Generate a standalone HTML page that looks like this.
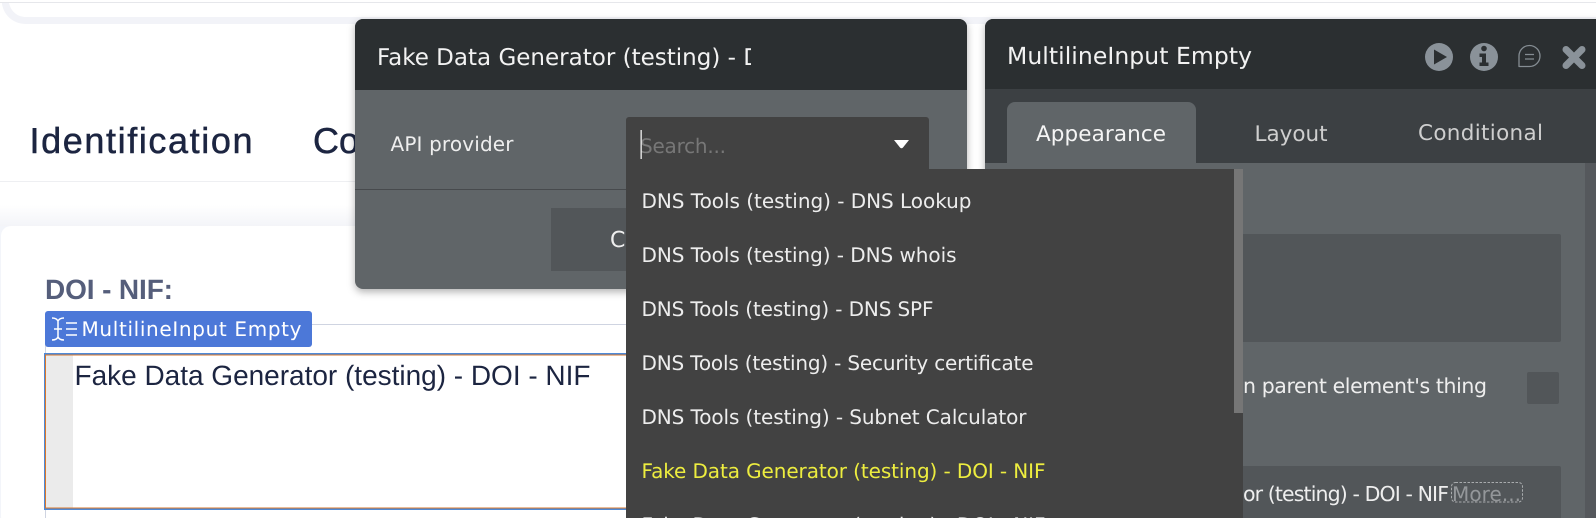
<!DOCTYPE html>
<html lang="en"><head><meta charset="utf-8"><title>Bubble editor</title>
<style>
html,body{margin:0;padding:0;width:1596px;height:518px;overflow:hidden;background:#fff}
svg{display:block;position:absolute;left:0;top:0}
.o{font-family:"DejaVu Sans","Liberation Sans",sans-serif}
.l{font-family:"Liberation Sans",sans-serif}
</style></head><body>
<svg width="1596" height="518" viewBox="0 0 1596 518" xmlns="http://www.w3.org/2000/svg" text-rendering="geometricPrecision">
<defs>
<filter id="sh" x="-10%" y="-10%" width="120%" height="125%"><feDropShadow dx="0" dy="3" stdDeviation="4" flood-color="#000" flood-opacity=".3"/></filter>
<linearGradient id="g" x1="0" y1="0" x2="0" y2="1"><stop offset="0" stop-color="#fff"/><stop offset="1" stop-color="#f3f4f8"/></linearGradient>
<clipPath id="c1"><rect x="355" y="19" width="396" height="70"/></clipPath>
</defs>
<!-- page background -->
<rect x="0" y="2" width="1596" height="1" fill="#e6e7eb"/>
<path d="M2 3V4C4 16 14 24 26 24H1596V17H26C18 17 11 12 9 3Z" fill="#f2f3f8"/>
<text class="l" x="29.500" y="153" font-size="36" fill="#1c2541" stroke="#1c2541" stroke-width=".5" textLength="223">Identification</text>
<text class="l" x="313" y="153" font-size="36" fill="#1c2541" stroke="#1c2541" stroke-width=".5">Co</text>
<rect x="0" y="181" width="360" height="1" fill="#eeeff2"/>
<rect x="0" y="205" width="360" height="22" fill="url(#g)"/>
<rect x="0" y="226" width="1596" height="292" fill="#f3f5fa"/>
<rect x="1" y="226" width="1595" height="300" rx="10" fill="#fff"/>
<text class="l" x="45" y="299" font-size="28" font-weight="700" fill="#555e7b" textLength="128">DOI - NIF:</text>
<rect x="312" y="324" width="320" height="1" fill="#cfd4e1"/>
<rect x="45" y="324" width="1" height="194" fill="#cfd4e1"/>
<rect x="45" y="311" width="267" height="36" rx="3" fill="#4c78d8"/>
<g stroke="#fff" fill="none" stroke-width="1.5">
<path d="M52 318c3 0 5 1 6 3 1-2 3-3 6-3M58 321v16M52 340c3 0 5-1 6-3 1 2 3 3 6 3M54 329h8"/>
<path d="M66 323h11M66 329h11M66 335h11"/>
</g>
<text class="o" x="81.500" y="336" font-size="20" fill="#fff" textLength="220">MultilineInput Empty</text>
<rect x="44" y="353" width="592" height="157" fill="#4e8ad8"/>
<rect x="45" y="354.500" width="591" height="154" fill="#d9782d"/>
<rect x="46" y="355.500" width="590" height="152" fill="#fff"/>
<rect x="46" y="355.500" width="27" height="152" fill="#ebebeb"/>
<text class="l" x="74.500" y="385" font-size="28" fill="#1c2541" textLength="516">Fake Data Generator (testing) - DOI - NIF</text>
<!-- modal 1 -->
<g filter="url(#sh)"><rect x="355" y="19" width="612" height="270" rx="8" fill="#606568"/></g>
<path d="M355 90V27a8 8 0 0 1 8-8H959a8 8 0 0 1 8 8V90Z" fill="#2b2f31"/>
<g clip-path="url(#c1)"><text class="o" x="377" y="65" font-size="23" fill="#f2f2f2" textLength="469">Fake Data Generator (testing) - DOI - NIF</text></g>
<text class="o" x="390.500" y="151" font-size="20" fill="#eee" textLength="123">API provider</text>
<rect x="355" y="189" width="612" height="1" fill="#474a4d"/>
<rect x="551" y="208" width="100" height="63" fill="#525659"/>
<text class="o" x="610" y="247" font-size="22" fill="#eee">C</text>
<!-- modal 2 -->
<g filter="url(#sh)"><rect x="985" y="19" width="620" height="520" rx="8" fill="#54585b"/></g>
<rect x="985" y="163" width="600" height="355" fill="#606568"/>
<rect x="985" y="89" width="620" height="74" fill="#3c4043"/>
<path d="M985 89V27a8 8 0 0 1 8-8H1596V89Z" fill="#2b2f31"/>
<text class="o" x="1007" y="64" font-size="23.500" fill="#f2f2f2" textLength="245">MultilineInput Empty</text>
<circle cx="1439" cy="57" r="14" fill="#8a9299"/>
<path d="M1434 49.500 1434 64.500 1447 57Z" fill="#2b2f31"/>
<circle cx="1484" cy="57" r="14" fill="#8a9299"/>
<circle cx="1484" cy="48.500" r="2.800" fill="#2b2f31"/>
<path d="M1479.500 53.500h6.500v9h2.500v3.500h-9v-3.500h2.500v-5.500h-2.500Z" fill="#2b2f31"/>
<path d="M1519 66.500V56a10.500 10.500 0 1 1 10.500 10.500Z" fill="none" stroke="#858d93" stroke-width="1.300" stroke-linejoin="round"/>
<path d="M1525 54.500h9M1525 59h9" stroke="#858d93" stroke-width="1.300" fill="none"/>
<path d="M1566 49.500 1582 65.500M1582 49.500 1566 65.500" stroke="#8a9299" stroke-width="7" stroke-linecap="round"/>
<path d="M1007 163V110a8 8 0 0 1 8-8H1188a8 8 0 0 1 8 8V163Z" fill="#606568"/>
<text class="o" x="1036" y="141" font-size="21.500" fill="#f5f5f5" textLength="130">Appearance</text>
<text class="o" x="1254.500" y="141" font-size="21.500" fill="#cfcfcf" textLength="73">Layout</text>
<text class="o" x="1418" y="140" font-size="21.500" fill="#cfcfcf" textLength="125">Conditional</text>
<rect x="1240" y="234" width="321" height="108" rx="2" fill="#525659"/>
<text class="o" x="1243" y="393" font-size="20.500" fill="#eee" textLength="244">n parent element's thing</text>
<rect x="1527" y="372" width="32" height="32" rx="2" fill="#525659"/>
<rect x="1240" y="466" width="321" height="60" rx="2" fill="#525659"/>
<text class="o" x="1243" y="501" font-size="20.500" fill="#eee" textLength="206">or (testing) - DOI - NIF</text>
<text class="o" x="1452" y="501" font-size="20" fill="#94979a" textLength="69">More...</text>
<rect x="1451.500" y="482.500" width="71" height="19.500" rx="4" fill="none" stroke="#a8abad" stroke-width="1" stroke-dasharray="2.500 1.500"/>
<!-- dropdown -->
<path d="M626 518V120a3 3 0 0 1 3-3H926a3 3 0 0 1 3 3V169H1243V518Z" fill="#424242"/>
<rect x="1234" y="169" width="9" height="244" fill="#767676"/>
<text class="o" x="640" y="153" font-size="20" fill="#777" textLength="86">Search...</text>
<rect x="640.500" y="130" width="1.300" height="29" fill="#f0f0f0"/>
<path d="M894 140H909L903 147.500Q901.500 149 900 147.500Z" fill="#fff"/>
<g class="o" font-size="20" fill="#ededed">
<text x="641.500" y="208" textLength="330">DNS Tools (testing) - DNS Lookup</text>
<text x="641.500" y="262" textLength="315">DNS Tools (testing) - DNS whois</text>
<text x="641.500" y="316" textLength="292">DNS Tools (testing) - DNS SPF</text>
<text x="641.500" y="370" textLength="392">DNS Tools (testing) - Security certificate</text>
<text x="641.500" y="424" textLength="385">DNS Tools (testing) - Subnet Calculator</text>
<text x="641.500" y="478" fill="#eded3f" textLength="404">Fake Data Generator (testing) - DOI - NIF</text>
<text x="641.500" y="532" textLength="404">Fake Data Generator (testing) - DOI - NIF</text>
</g>
</svg>
</body></html>
